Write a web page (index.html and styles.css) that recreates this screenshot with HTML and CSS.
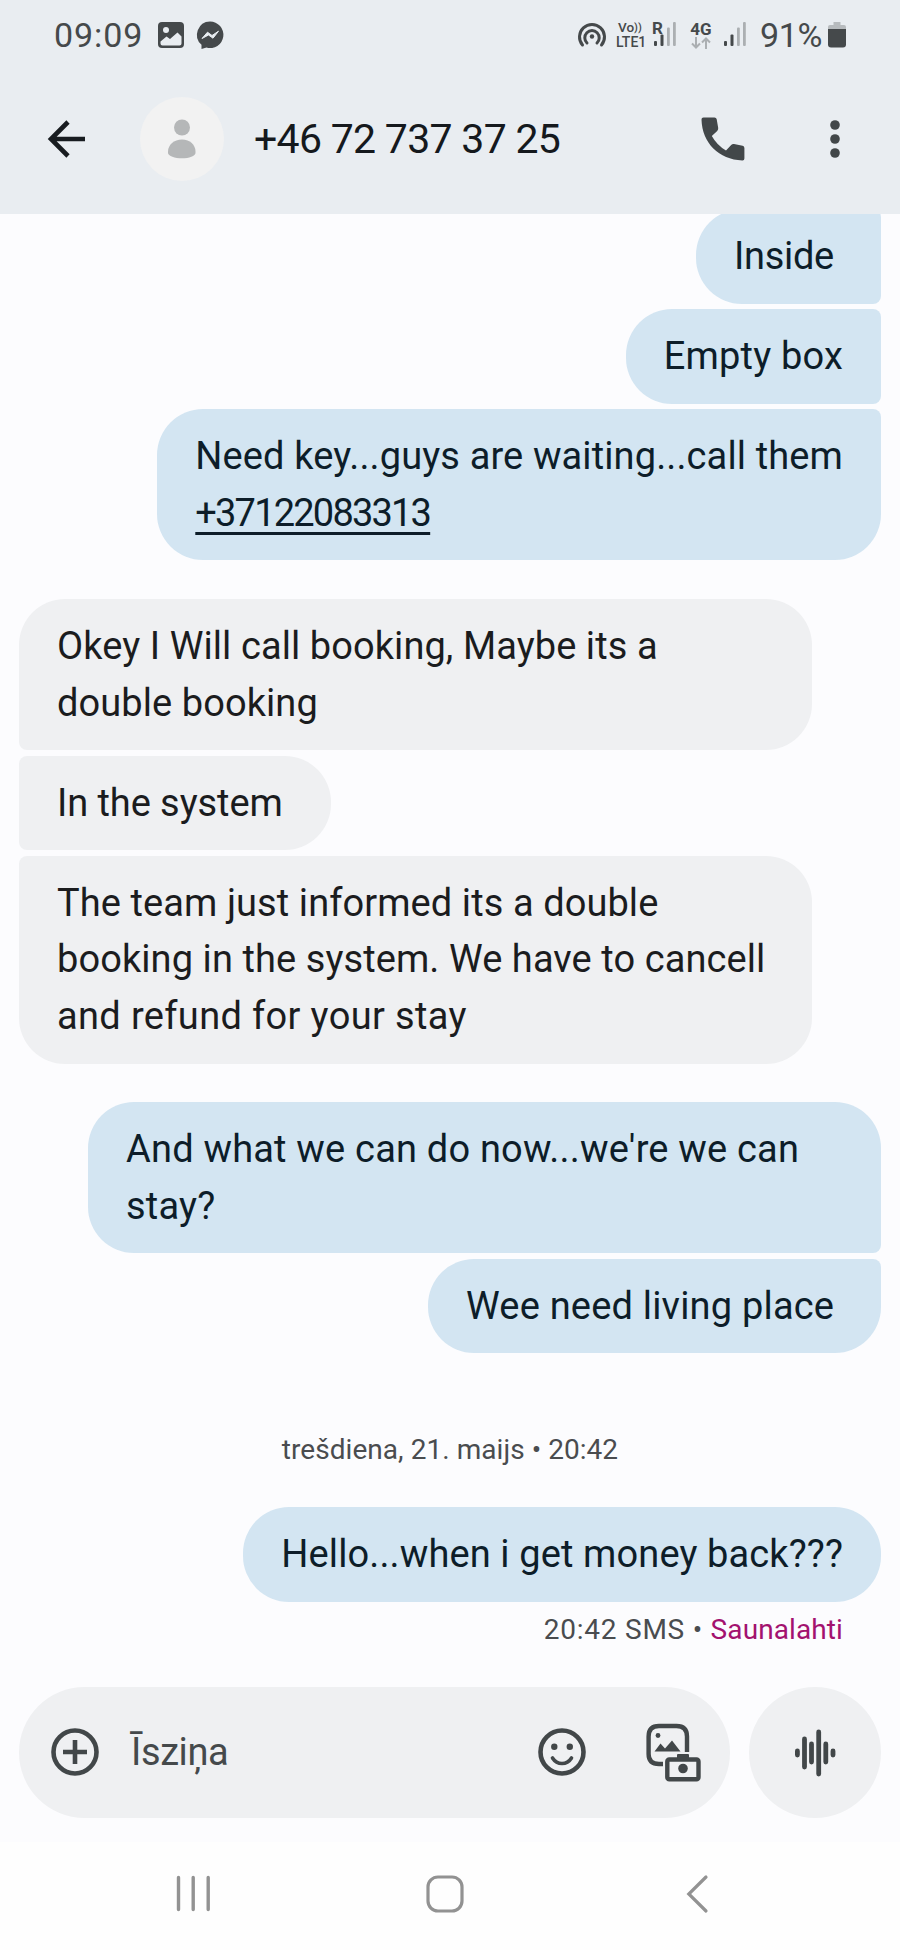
FILE: index.html
```
<!DOCTYPE html>
<html lang="lv">
<head>
<meta charset="utf-8">
<title>+46 72 737 37 25</title>
<link rel="stylesheet" href="styles.css">
</head>
<body>
<header class="top">
  <div class="status">
    <span class="clock">09:09</span>
    <svg class="ico-photo" width="28" height="28" viewBox="0 0 28 28"><rect x="1" y="1" width="26" height="26" rx="4" fill="#45494b"/><circle cx="9" cy="9" r="3" fill="#e9edf1"/><path d="M3.5 20.5L9.5 15.500L13 18L20.500 11.500L24.500 15.500V22.500Q24.500 24.500 22.500 24.500H5.500Q3.500 24.500 3.500 22.500Z" fill="#e9edf1"/></svg>
    <svg class="ico-messenger" width="28" height="28" viewBox="0 0 28 28"><path d="M14 .5A13.300 13.300 0 1 1 10.500 26.600L5.500 28V23.800A13.300 13.300 0 0 1 14 .5Z" fill="#45494b"/><path d="M6 17.500L11.500 11.200L16 14.500L22.500 10.200L17 17.200L12.500 14Z" fill="#e9edf1" stroke="#e9edf1" stroke-width="1" stroke-linejoin="round"/></svg>
    <svg class="ico-cast" width="30" height="28" viewBox="0 0 30 28" fill="none" stroke="#45494b" stroke-width="3" stroke-linecap="round"><path d="M5.500 24A12.500 12.500 0 1 1 24.500 24"/><path d="M10 22A7.200 7.200 0 1 1 20 22"/><circle cx="15" cy="15.500" r="2.200" fill="#45494b" stroke="none"/></svg>
    <div class="volte"><span class="vo">Vo<span class="waves">))</span></span><span class="lte">LTE1</span></div>
    <div class="roam"><span class="badge">R</span>
      <svg width="25" height="28" viewBox="0 0 25 28"><g fill="#45494b"><rect x="1" y="20" width="3" height="5" rx="1"/><rect x="7.500" y="13.500" width="3" height="11.500" rx="1"/></g><g fill="#abafb2"><rect x="14" y="6.500" width="2.800" height="18.500" rx="1"/><rect x="20" y="1" width="2.800" height="24" rx="1"/></g></svg>
    </div>
    <div class="net"><span class="g4">4G</span>
      <svg width="20" height="12" viewBox="0 0 20 12" fill="none" stroke="#abafb2" stroke-width="2"><path d="M5 0V10.500M1 6.500L5 10.500L9 6.500M15 12V1.500M11 5.500L15 1.500L19 5.500"/></svg>
    </div>
    <svg class="ico-signal" width="25" height="28" viewBox="0 0 25 28"><g fill="#45494b"><rect x="1" y="20" width="3" height="5" rx="1"/><rect x="7.500" y="13.500" width="3" height="11.500" rx="1"/></g><g fill="#abafb2"><rect x="14" y="6.500" width="2.800" height="18.500" rx="1"/><rect x="20" y="1" width="2.800" height="24" rx="1"/></g></svg>
    <span class="pct">91%</span>
    <svg class="ico-batt" width="18" height="26" viewBox="0 0 18 26"><path d="M5.500 0H12.500V3H16Q18 3 18 5V8H0V5Q0 3 2 3H5.500Z" fill="#b7bbbe"/><path d="M0 7H18V22.500Q18 25.500 15 25.500H3Q0 25.500 0 22.500Z" fill="#45494b"/></svg>
  </div>
  <div class="appbar">
    <svg class="back" width="40" height="40" viewBox="0 0 40 40" fill="none" stroke="#181c20" stroke-width="4.600"><path d="M39 20H5M22 3L5 20L22 37"/></svg>
    <div class="avatar"><svg width="28" height="40" viewBox="0 0 28 40" fill="#b5b7b8"><circle cx="14" cy="8.500" r="8"/><path d="M0 32.500C0 26 6 20.500 14 20.500S27.500 26 27.500 32.500V34C27.500 37 21 39.300 14 39.300S0 37 0 34Z"/></svg></div>
    <h1 class="title">+46 72 737 37 25</h1>
    <svg class="call" width="44" height="44" viewBox="0 0 44 44"><path d="M2.500 .5H13.500Q15.400 .5 15.700 2.300L17.200 11Q17.400 12.700 16.200 13.900L10.800 18.900Q16 28.200 25 33.400L30.200 28Q31.400 26.800 33 27.100L41.600 28.800Q43.400 29.200 43.400 31V41.500Q43.400 43.600 41.300 43.500C18 42.800 1.100 26 .5 2.600Q.4 .5 2.500 .5Z" fill="#424749"/></svg>
    <svg class="more" width="10" height="38" viewBox="0 0 10 38" fill="#424749"><circle cx="5" cy="5" r="4.800"/><circle cx="5" cy="19" r="4.800"/><circle cx="5" cy="33" r="4.800"/></svg>
  </div>
</header>

<main class="thread">
  <section class="group out">
    <p class="bubble w-inside">Inside</p>
    <p class="bubble">Empty box</p>
    <p class="bubble snug">Need key...guys are waiting...call them<br><a class="tel">+37122083313</a></p>
  </section>
  <section class="group in">
    <p class="bubble full">Okey I Will call booking, Maybe its a<br>double booking</p>
    <p class="bubble w-system">In the system</p>
    <p class="bubble full">The team just informed its a double<br>booking in the system. We have to cancell<br><span class="loose">and refund for your stay</span></p>
  </section>
  <section class="group out">
    <p class="bubble full">And what we can do now...we're we can<br>stay?</p>
    <p class="bubble w-place">Wee need living place</p>
  </section>
  <p class="date">trešdiena, 21. maijs • 20:42</p>
  <section class="group out">
    <p class="bubble snug">Hello...when i get money back???</p>
  </section>
  <p class="meta">20:42 SMS • <span class="sim">Saunalahti</span></p>
</main>

<div class="composer">
  <div class="field">
    <svg width="48" height="48" viewBox="0 0 48 48" fill="none" stroke="#424749" stroke-width="4.600"><circle cx="24" cy="24" r="21.500"/><path d="M24 12V36M12 24H36"/></svg>
    <span class="hint">Īsziņa</span>
    <svg class="smile" width="48" height="48" viewBox="0 0 48 48" fill="none" stroke="#424749"><circle cx="24" cy="24" r="21.500" stroke-width="4.600"/><g fill="#424749" stroke="none"><circle cx="16.300" cy="18.700" r="3.200"/><circle cx="31.800" cy="18.700" r="3.200"/></g><path d="M14.500 30Q18 35.500 24 35.500T33.500 30" stroke-width="3.600" stroke-linecap="round"/></svg>
    <svg class="gallery" width="55" height="58" viewBox="0 0 55 58"><g fill="none" stroke="#424749" stroke-width="4.400"><path d="M17 41H13Q2.600 41 2.600 31V13.500Q2.600 3 13 3H30.500Q41 3 41 13.500V29"/><rect x="21.300" y="36.500" width="31.200" height="19.800" rx="2"/></g><g fill="#424749"><rect x="31" y="31" width="12" height="6" rx="1"/><circle cx="37" cy="45.500" r="4.800"/><circle cx="12" cy="12.500" r="2.400"/><path d="M8.500 28.500L14.500 20.500L19 25.500L26 17.500L34.500 28.500Z"/></g></svg>
  </div>
  <div class="voice"><svg width="42" height="48" viewBox="0 0 42 48" stroke="#424749" stroke-width="4.800" stroke-linecap="round"><path d="M3.400 22V26M10.500 10V38M17.500 15V33M24.700 3V45M31.800 15V33M39 22V26"/></svg></div>
</div>

<nav class="nav">
  <svg width="36" height="37" viewBox="0 0 36 37" stroke="#929292" stroke-width="3.400" stroke-linecap="round"><path d="M3.500 2.500V34.500M18.200 2.500V34.500M33.200 2.500V34.500"/></svg>
  <svg width="38" height="38" viewBox="0 0 38 38" fill="none" stroke="#929292" stroke-width="3.200"><rect x="2" y="2" width="34" height="34" rx="10"/></svg>
  <svg width="22" height="38" viewBox="0 0 22 38" fill="none" stroke="#929292" stroke-width="3.200" stroke-linecap="round"><path d="M20 2L2.800 19L20 36"/></svg>
</nav>
</body>
</html>
```
FILE: styles.css
```
* { box-sizing: border-box; margin: 0; padding: 0; }
body {
  width: 900px;
  height: 1950px;
  display: flex;
  flex-direction: column;
  overflow: hidden;
  background: #fcfcfe;
  font-family: Roboto, "Noto Sans", sans-serif;
  color: #1b1c1e;
}
svg { display: block; flex: none; overflow: visible; }

.top { flex: none; height: 213.5px; background: #e9edf1; position: relative; z-index: 1; }
.status {
  height: 70px;
  padding-left: 54px;
  display: flex;
  align-items: center;
  color: #45494b;
}
.clock { width: 103px; font-size: 34px; letter-spacing: .9px; }
.pct { width: 64px; margin-left: 12px; font-size: 34px; letter-spacing: -.3px; }
.ico-messenger { margin-left: 11px; }
.ico-cast { margin-left: 353px; }
.volte { width: 33px; margin-left: 9px; }
.vo, .lte { display: block; font-weight: 500; font-size: 14px; line-height: 14px; white-space: nowrap; }
.vo { padding-left: 2px; height: 14px; font-size: 13.5px; line-height: 12px; }
.lte { height: 14px; line-height: 15px; }
.waves { font-size: 11px; vertical-align: 1px; }
.roam { position: relative; margin-left: 4px; }
.badge { position: absolute; left: -1px; top: -3px; font-size: 17px; line-height: 20px; font-weight: 700; }
.net { width: 22px; margin-left: 12px; display: flex; flex-direction: column; align-items: center; }
.g4 { font-size: 17px; line-height: 16px; font-weight: 700; }
.ico-signal { margin-left: 11px; }
.ico-batt { margin-left: 4px; }

.appbar { height: 138px; display: flex; align-items: center; padding-left: 46px; }
.avatar {
  width: 84px;
  height: 84px;
  margin-left: 54px;
  border-radius: 50%;
  background: #f2f2f2;
  display: grid;
  place-items: center;
}
.title { width: 439px; margin-left: 30px; font-size: 41px; font-weight: 400; letter-spacing: -.7px; color: #15191d; }
.call { margin-left: 8px; }
.more { margin-left: 85px; }

.thread { flex: 1; min-height: 0; padding: 0 19px; margin-top: -4.500px; }
.group { display: flex; flex-direction: column; gap: 5.330px; margin-bottom: 38.500px; }
.bubble {
  padding: 19px 38px;
  font-size: 38px;
  line-height: 56.670px;
  letter-spacing: .19px;
  white-space: nowrap;
}
.out { align-items: flex-end; }
.in { align-items: flex-start; }
.out .bubble { background: #d3e5f2; color: #0d1d29; border-radius: 46px 8px 8px 46px; }
.in .bubble { background: #eff0f2; border-radius: 8px 46px 46px 8px; letter-spacing: .08px; }
.out .bubble:first-child { border-top-right-radius: 46px; }
.out .bubble:last-child { border-bottom-right-radius: 46px; }
.in .bubble:first-child { border-top-left-radius: 46px; }
.in .bubble:last-child { border-bottom-left-radius: 46px; }
.out .bubble.w-inside { width: 185px; border-top-right-radius: 8px; letter-spacing: -.3px; }
.in .bubble.w-system { width: 312px; letter-spacing: -.08px; }
.w-place { width: 453px; }
.in .full { width: 792.500px; }
.out .full { width: 793px; }
.out .bubble.snug { letter-spacing: .12px; }
.tel { letter-spacing: -1.800px; text-decoration: underline; text-decoration-thickness: 3px; text-underline-offset: 6px; }
.loose { letter-spacing: .35px; }

.date { margin-top: 79px; text-align: center; font-size: 28px; line-height: 36px; letter-spacing: .05px; color: #4a4c4f; }
.date + .group { margin-top: 39px; margin-bottom: 0; }
.meta { margin-top: 10px; padding-right: 38px; text-align: right; font-size: 28px; line-height: 36px; letter-spacing: .75px; color: #4a4c4f; }
.sim { color: #a3126f; letter-spacing: .1px; }

.composer { flex: none; height: 155px; padding: 0 19px; display: flex; gap: 19px; }
.field { width: 711px; height: 130.500px; border-radius: 66px; background: #eff0f2; display: flex; align-items: center; padding-left: 32px; }
.hint { width: 402px; margin-left: 32px; font-size: 38px; letter-spacing: -.4px; color: #45494b; }
.smile { margin-left: 4.500px; }
.gallery { margin-left: 60px; }
.voice { width: 132px; height: 131px; border-radius: 50%; background: #eff0f2; display: grid; place-items: center; }

.nav { flex: none; height: 108px; padding: 0 0 5px 175px; background: #fefefe; display: flex; align-items: center; }
.nav svg + svg { margin-left: 215px; }
.nav svg + svg + svg { margin-left: 222px; }
```
